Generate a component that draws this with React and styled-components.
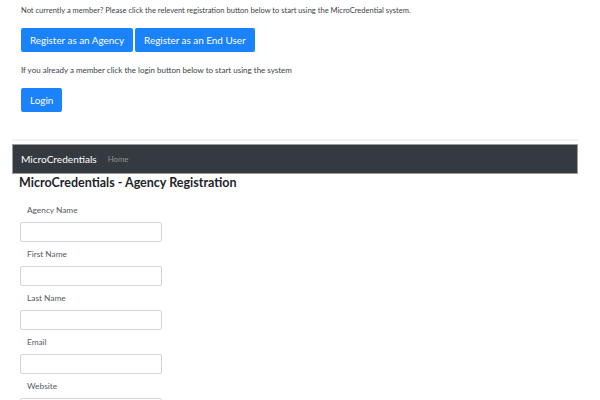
import React from "react";
import styled, { createGlobalStyle } from "styled-components";

const Global = createGlobalStyle`
  html, body { margin: 0; padding: 0; background: #fff; }
  body { font-family: Lato, "Open Sans", sans-serif; color: #212529; }
  * { box-sizing: border-box; }
`;

const Page = styled.div`
  width: 600px;
  height: 400px;
  overflow: hidden;
`;

const Intro = styled.section`
  padding: 5px 0 0 21px;
  display: flex;
  flex-direction: column;
`;

const Note = styled.p`
  margin: ${(p) => p.$m || 0};
  font-size: ${(p) => p.$size || 7.55}px;
  line-height: 11px;
  color: #3a3f44;
`;

const ButtonRow = styled.div`
  display: flex;
  gap: 2px;
  margin-top: 12px;
`;

const Button = styled.button`
  background: #1a82fb;
  color: #fff;
  border: none;
  border-radius: 2px;
  height: 24px;
  padding: 0 9px;
  font-family: inherit;
  font-size: 9.9px;
  line-height: 24px;
  cursor: pointer;
`;

const Shell = styled.div`
  margin: 27px 0 0 12px;
  width: 566px;
  border-top: 2px solid #f1f2f3;
  padding-top: 3px;
`;

const Navbar = styled.nav`
  height: 30px;
  background: #343a40;
  border: 1px solid #9a9c9e;
  display: flex;
  align-items: center;
  padding-left: 8px;
  gap: 11px;
`;

const Brand = styled.span`
  color: #fff;
  font-size: 10.1px;
`;

const NavLink = styled.span`
  color: #8d9196;
  font-size: 7.8px;
`;

const Title = styled.h1`
  margin: 1px 0 0 7px;
  font-size: 12.5px;
  line-height: 16px;
  font-weight: 700;
  color: #212529;
`;

const Form = styled.form`
  display: flex;
  flex-direction: column;
  padding: 13px 0 0 8px;
  gap: 6px;
`;

const Field = styled.div`
  display: flex;
  flex-direction: column;
  gap: 5px;
`;

const Label = styled.label`
  font-size: 8.3px;
  line-height: 13px;
  color: #55595e;
  padding-left: 7px;
`;

const Input = styled.input`
  width: 142px;
  height: 20px;
  border: 1px solid #d3d6d9;
  border-radius: 2px;
  background: #fff;
`;

const fields = ["Agency Name", "First Name", "Last Name", "Email", "Website"];

export default function App() {
  return (
    <Page>
      <Global />
      <Intro>
        <Note>
          Not currently a member? Please click the relevent registration button below to start using the MicroCredential system.
        </Note>
        <ButtonRow>
          <Button>Register as an Agency</Button>
          <Button>Register as an End User</Button>
        </ButtonRow>
        <Note $m="13px 0 0 0" $size={8}>
          If you already a member click the login button below to start using the system
        </Note>
        <ButtonRow>
          <Button>Login</Button>
        </ButtonRow>
      </Intro>
      <Shell>
        <Navbar>
          <Brand>MicroCredentials</Brand>
          <NavLink>Home</NavLink>
        </Navbar>
        <Title>MicroCredentials - Agency Registration</Title>
        <Form>
          {fields.map((f) => (
            <Field key={f}>
              <Label>{f}</Label>
              <Input type="text" />
            </Field>
          ))}
        </Form>
      </Shell>
    </Page>
  );
}
